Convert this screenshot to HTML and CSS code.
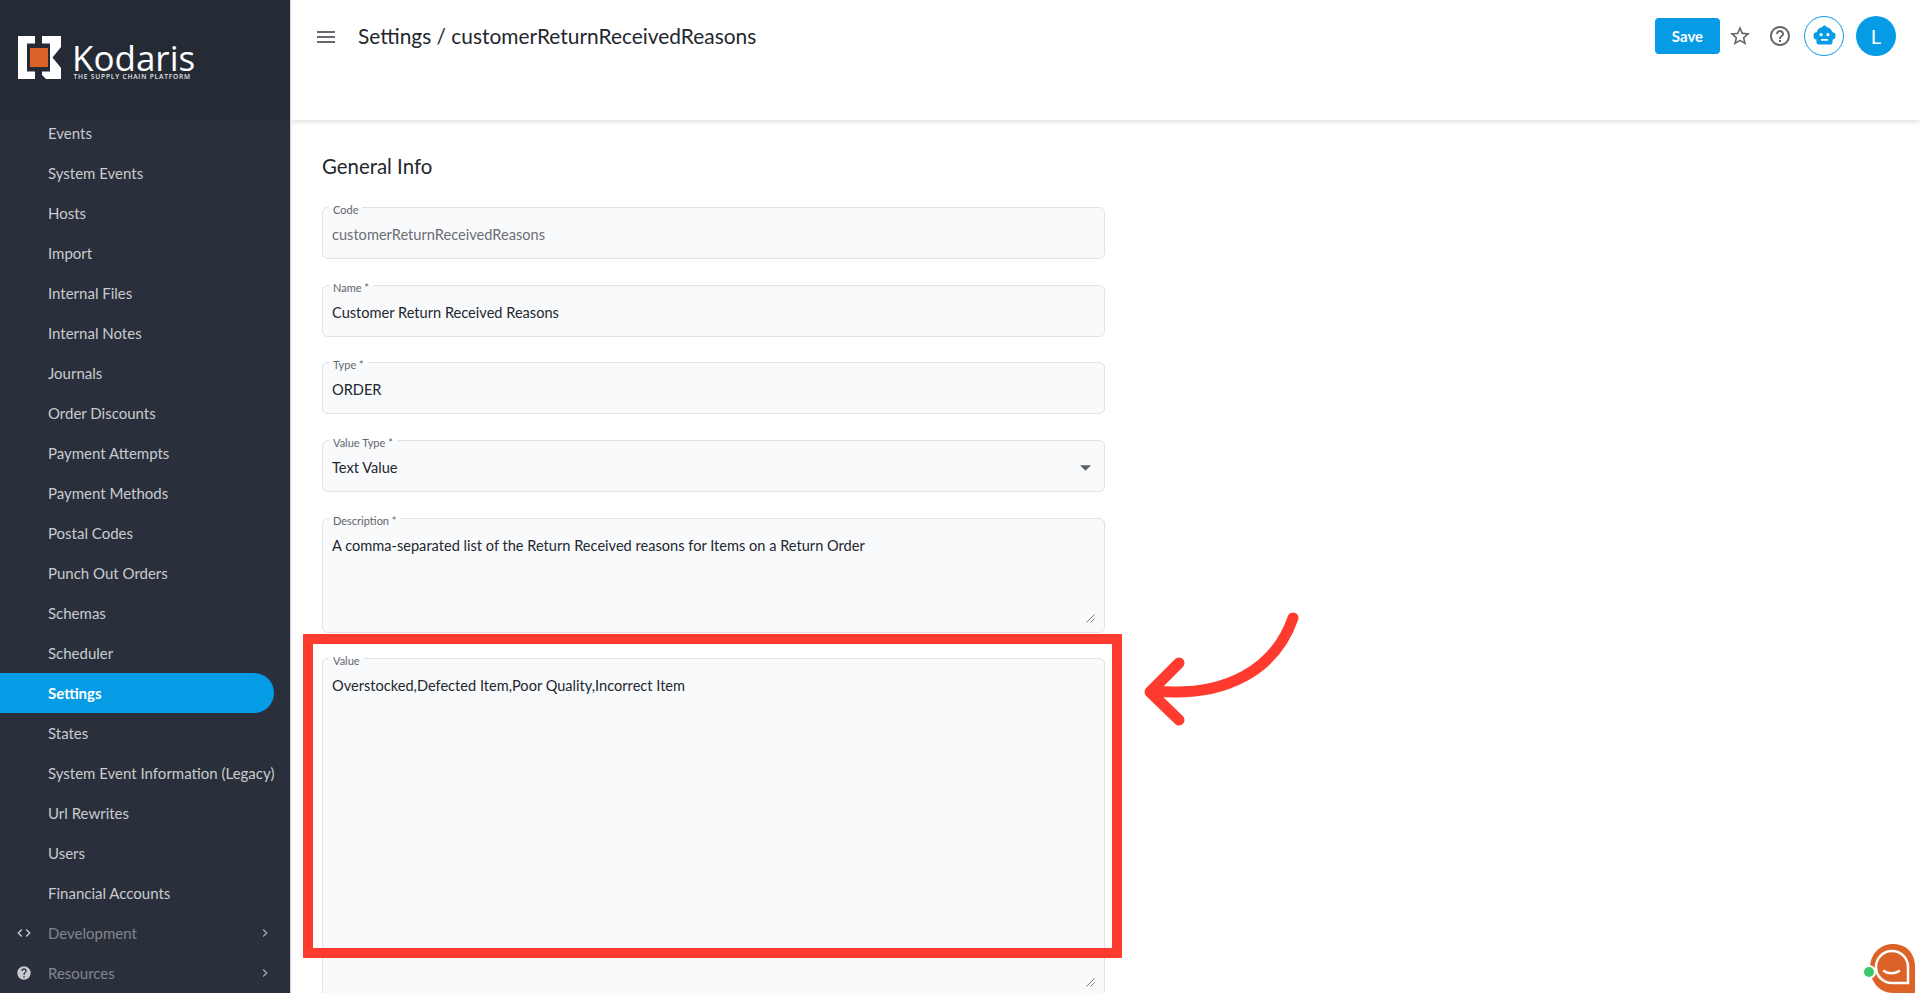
FILE: index.html
```html
<!DOCTYPE html>
<html lang="en">
<head>
<meta charset="utf-8">
<title>Settings / customerReturnReceivedReasons</title>
<link rel="stylesheet" href="styles.css">
</head>
<body>
<div class="app">
  <aside class="sidebar">
    <div class="brand">
      <svg class="brand-mark" viewBox="0 0 43 43" aria-hidden="true">
        <path fill="#fff" d="M0 0H17V7.500H9V35.500H17V43H0Z"/>
        <path fill="#fff" d="M24 0H43V11L34.500 21.500L43 32V43H28L24 39V35.500H32V7.500H24Z"/>
        <rect fill="#dd6227" x="12" y="12" width="18" height="19"/>
      </svg>
      <div class="brand-text">
        <div class="brand-name">Kodaris</div>
        <div class="brand-tag">THE SUPPLY CHAIN PLATFORM</div>
      </div>
    </div>
    <nav class="nav">
      <div class="nav-inner">
        <a class="nav-item">Events</a>
        <a class="nav-item">System Events</a>
        <a class="nav-item">Hosts</a>
        <a class="nav-item">Import</a>
        <a class="nav-item">Internal Files</a>
        <a class="nav-item">Internal Notes</a>
        <a class="nav-item">Journals</a>
        <a class="nav-item">Order Discounts</a>
        <a class="nav-item">Payment Attempts</a>
        <a class="nav-item">Payment Methods</a>
        <a class="nav-item">Postal Codes</a>
        <a class="nav-item">Punch Out Orders</a>
        <a class="nav-item">Schemas</a>
        <a class="nav-item">Scheduler</a>
        <a class="nav-item active">Settings</a>
        <a class="nav-item">States</a>
        <a class="nav-item">System Event Information (Legacy)</a>
        <a class="nav-item">Url Rewrites</a>
        <a class="nav-item">Users</a>
        <a class="nav-item">Financial Accounts</a>
        <a class="nav-group">
          <svg class="group-icon" viewBox="0 0 24 24"><path d="M9.400 16.600L4.800 12l4.600-4.600L8 6l-6 6 6 6 1.400-1.400zm5.200 0l4.600-4.600-4.600-4.600L16 6l6 6-6 6-1.400-1.400z"/></svg>
          <span class="group-label">Development</span>
          <svg class="group-chev" viewBox="0 0 24 24"><path d="M10 6L8.590 7.410 13.170 12l-4.580 4.590L10 18l6-6z"/></svg>
        </a>
        <a class="nav-group">
          <svg class="group-icon" viewBox="0 0 24 24"><path d="M12 2C6.480 2 2 6.480 2 12s4.480 10 10 10 10-4.480 10-10S17.520 2 12 2zm1 17h-2v-2h2v2zm2.070-7.750l-.9.920C13.450 12.900 13 13.500 13 15h-2v-.5c0-1.100.45-2.100 1.170-2.830l1.240-1.260c.37-.36.59-.86.59-1.410 0-1.100-.9-2-2-2s-2 .9-2 2H8c0-2.210 1.790-4 4-4s4 1.790 4 4c0 .88-.36 1.680-.93 2.250z"/></svg>
          <span class="group-label">Resources</span>
          <svg class="group-chev" viewBox="0 0 24 24"><path d="M10 6L8.590 7.410 13.170 12l-4.580 4.590L10 18l6-6z"/></svg>
        </a>
      </div>
    </nav>
  </aside>

  <main class="main">
    <header class="topbar">
      <svg class="menu-icon" viewBox="0 0 24 24"><path d="M3 18h18v-2H3v2zm0-5h18v-2H3v2zm0-7v2h18V6H3z"/></svg>
      <h1 class="page-title">Settings / customerReturnReceivedReasons</h1>
      <div class="actions">
        <button class="save">Save</button>
        <svg class="action-icon star" viewBox="0 0 24 24"><path d="M22 9.240l-7.190-.62L12 2 9.190 8.630 2 9.240l5.460 4.730L5.820 21 12 17.270 18.180 21l-1.630-7.030L22 9.240zM12 15.400l-3.760 2.270 1-4.280-3.320-2.880 4.380-.38L12 6.100l1.710 4.040 4.380.38-3.320 2.880 1 4.280L12 15.400z"/></svg>
        <svg class="action-icon help" viewBox="0 0 24 24"><path d="M11 18h2v-2h-2v2zm1-16C6.480 2 2 6.480 2 12s4.480 10 10 10 10-4.480 10-10S17.520 2 12 2zm0 18c-4.410 0-8-3.590-8-8s3.590-8 8-8 8 3.590 8 8-3.590 8-8 8zm0-14c-2.210 0-4 1.790-4 4h2c0-1.100.9-2 2-2s2 .9 2 2c0 2-3 1.750-3 5h2c0-2.250 3-2.500 3-5 0-2.210-1.790-4-4-4z"/></svg>
        <div class="bot">
          <svg viewBox="2 2 20 20"><path fill-rule="evenodd" d="M12 2.500a2 2 0 0 1 2 1.500c2.600.3 4.400 2 4.800 4.400H19a2.500 2.500 0 0 1 2.500 2.500v1.200a2.500 2.500 0 0 1-2.500 2.500v2.400a2 2 0 0 1-2 2H7a2 2 0 0 1-2-2v-2.400a2.500 2.500 0 0 1-2.500-2.500v-1.200A2.500 2.500 0 0 1 5 8.400h.2C5.600 6 7.400 4.300 10 4a2 2 0 0 1 2-1.500zM9 9a1.400 1.400 0 1 0 0 2.800A1.400 1.400 0 0 0 9 9zm6 0a1.400 1.400 0 1 0 0 2.800A1.400 1.400 0 0 0 15 9zm-6 5.200v1.400h6v-1.400z"/></svg>
        </div>
        <div class="avatar">L</div>
      </div>
    </header>

    <section class="content">
      <h2 class="section-title">General Info</h2>
      <div class="form">
        <div class="field">
          <span class="label">Code</span>
          <div class="value muted">customerReturnReceivedReasons</div>
        </div>
        <div class="field">
          <span class="label">Name *</span>
          <div class="value">Customer Return Received Reasons</div>
        </div>
        <div class="field">
          <span class="label">Type *</span>
          <div class="value">ORDER</div>
        </div>
        <div class="field">
          <span class="label">Value Type *</span>
          <div class="value">Text Value</div>
          <svg class="caret" viewBox="7 10 10 5"><path d="M7 10l5 5 5-5z"/></svg>
        </div>
        <div class="field area-desc">
          <span class="label">Description *</span>
          <div class="value">A comma-separated list of the Return Received reasons for Items on a Return Order</div>
          <svg class="grip" viewBox="0 0 9 9"><path d="M0.500 8.500L8.500 0.500M4.500 8.500L8.500 4.500"/></svg>
        </div>
        <div class="field area-value">
          <span class="label">Value</span>
          <div class="value">Overstocked,Defected Item,Poor Quality,Incorrect Item</div>
          <svg class="grip" viewBox="0 0 9 9"><path d="M0.500 8.500L8.500 0.500M4.500 8.500L8.500 4.500"/></svg>
        </div>
      </div>
    </section>
  </main>
</div>

<div class="callout-box"></div>
<svg class="callout-arrow" viewBox="0 0 1920 993" aria-hidden="true">
  <path d="M1293 618C1275 670 1225 698 1154 691M1179 663L1150 692L1179 720"/>
</svg>

<div class="chat">
  <svg viewBox="0 0 50 50" aria-hidden="true">
    <path fill="#dd6227" d="M25 1C38 1 47 10 47 24V50H25C11 50 2 38 2 25C2 11 12 1 25 1Z"/>
    <path fill="none" stroke="#fff" stroke-width="2.500" d="M24 8C33 8 40 15 40 24V40H24C15 40 8 33 8 24C8 15 15 8 24 8Z"/>
    <path fill="none" stroke="#fff" stroke-width="2.500" stroke-linecap="round" d="M16 28C20 31 27 31 31 28"/>
  </svg>
  <span class="chat-dot"></span>
</div>
</body>
</html>
```
FILE: styles.css
```css
* { box-sizing: border-box; }
html, body { margin: 0; height: 100%; overflow: hidden; background: #fff; }
body { font-family: "Lato", "Liberation Sans", sans-serif; color: #23272e; }

.app { display: flex; height: 993px; overflow: hidden; }

/* Sidebar */
.sidebar { width: 290px; flex: none; background: #2a303b; display: flex; flex-direction: column; box-shadow: 1px 0 1px #d5d6d9; position: relative; z-index: 2; }
.brand { height: 120px; flex: none; background: #252b35; display: flex; align-items: flex-start; padding: 36px 0 0 18px; gap: 11px; position: relative; z-index: 1; }
.brand-mark { width: 43px; height: 43px; flex: none; }
.brand-text { color: #fff; font-family: "Open Sans", sans-serif; }
.brand-name { font-size: 35px; line-height: 30px; height: 30px; margin-top: 7px; }
.brand-tag { font-size: 6.6px; line-height: 7px; letter-spacing: 0.82px; font-weight: 600; color: #e4e5e7; white-space: nowrap; margin-left: 1.500px; }
.nav { flex: 1; overflow: hidden; }
.nav-inner { margin-top: -7px; }
.nav-item { display: flex; align-items: center; height: 40px; width: 274px; padding-left: 48px; font-size: 15px; color: #c9cbce; border-radius: 0 20px 20px 0; white-space: nowrap; }
.nav-item.active { background: #069be5; color: #fff; font-weight: 700; }
.nav-group { display: flex; align-items: center; height: 40px; padding-left: 16px; font-size: 15px; color: #82868d; }
.group-icon { width: 16px; height: 16px; fill: #c9cbce; flex: none; }
.group-label { margin-left: 16px; flex: 1; }
.group-chev { width: 16px; height: 16px; fill: #a5a8ad; flex: none; margin-right: 17px; }

/* Main */
.main { flex: 1; min-width: 0; background: #fff; }
.topbar { height: 120px; padding: 16px 24px 0 24px; display: flex; align-items: flex-start; background: #fff; box-shadow: 0 2px 5px rgba(0,0,0,.12); position: relative; }
.menu-icon { width: 24px; height: 24px; fill: #666a70; margin-top: 9px; flex: none; }
.page-title { margin: 8px 0 0 20px; font-size: 20.9px; line-height: 24px; font-weight: 400; color: #23272e; }
.actions { margin-left: auto; display: flex; align-items: center; height: 40px; }
.save { width: 65px; height: 36px; border: 0; border-radius: 4px; background: #069be5; color: #fff; font: 700 15px "Lato", sans-serif; padding: 0; }
.action-icon { width: 24px; height: 24px; fill: #63666b; flex: none; }
.star { margin-left: 8px; }
.help { margin-left: 16px; }
.bot { width: 40px; height: 40px; margin-left: 12px; border: 1px solid #069be5; border-radius: 50%; display: flex; align-items: center; justify-content: center; }
.bot svg { width: 23px; height: 23px; fill: #069be5; }
.avatar { width: 40px; height: 40px; margin-left: 12px; border-radius: 50%; background: #069be5; color: #fff; display: flex; align-items: center; justify-content: center; font-size: 20px; }

.content { padding: 34px 0 0 32px; }
.section-title { margin: 0; font-size: 20.4px; line-height: 24px; font-weight: 400; color: #23272e; }
.form { width: 783px; margin-top: 29px; display: flex; flex-direction: column; gap: 25.7px; }
.field { position: relative; height: 52px; background: #f9fafc; border: 1px solid #e1e2e4; border-radius: 6px; padding: 18px 9px 0; }
.area-desc { height: 115px; }
.area-value { height: 339px; }
.label { position: absolute; left: 6px; top: -5px; padding: 0 4px; font-size: 11px; line-height: 13px; color: #62666c; background: linear-gradient(to bottom, #fff 5px, transparent 5px); white-space: nowrap; }
.value { font-size: 14.6px; line-height: 18px; color: #23272e; }
.value.muted { color: #6b6e74; }
.caret { position: absolute; right: 13px; top: 24px; width: 11px; height: 6px; fill: #5c5f64; }
.grip { position: absolute; right: 9px; bottom: 9px; width: 9px; height: 9px; fill: none; stroke: #777; stroke-width: 1; }

/* Annotation overlay */
.callout-box { position: absolute; left: 303px; top: 634px; width: 819px; height: 324px; border: 10px solid #ff3b2f; z-index: 5; }
.callout-arrow { position: absolute; left: 0; top: 0; width: 1920px; height: 993px; z-index: 5; fill: none; stroke: #ff3b2f; stroke-width: 11; stroke-linecap: round; stroke-linejoin: round; pointer-events: none; }

/* Chat bubble */
.chat { position: absolute; left: 1868px; top: 943px; width: 50px; height: 50px; z-index: 6; }
.chat svg { width: 50px; height: 50px; display: block; }
.chat-dot { position: absolute; left: -4px; top: 24px; width: 10px; height: 10px; border-radius: 50%; background: #3cc76a; box-shadow: 0 0 0 2px #fff; }
```
